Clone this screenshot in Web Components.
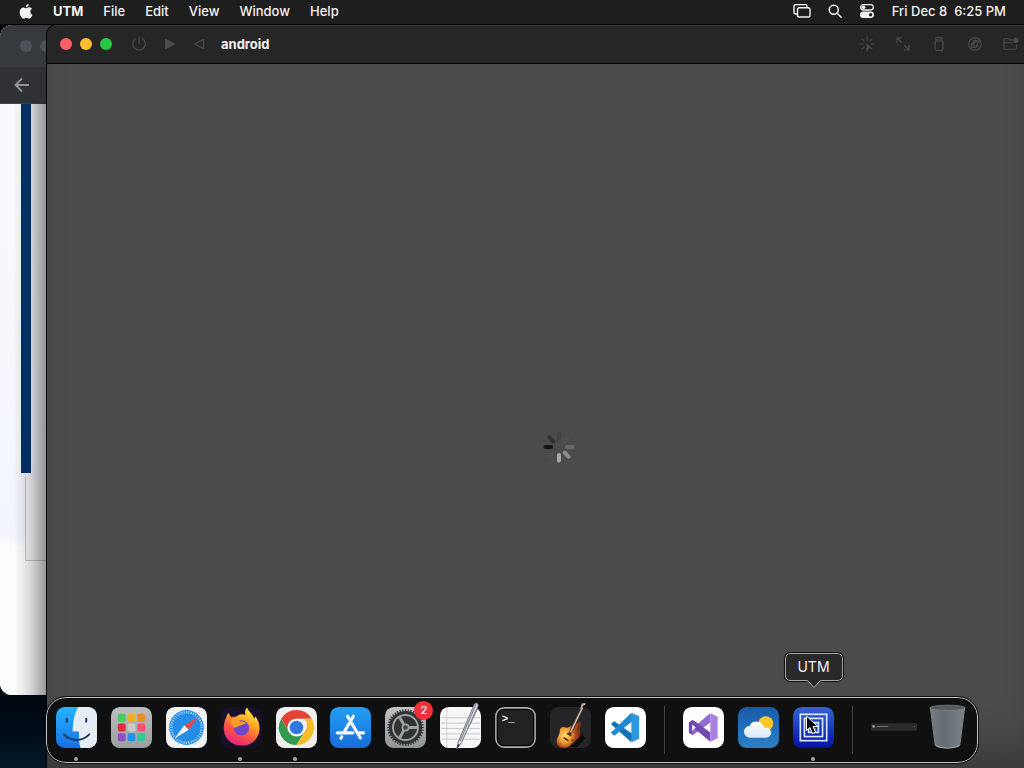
<!DOCTYPE html>
<html lang="en">
<head>
<meta charset="utf-8">
<title>Desktop</title>
<style>
  html, body { height: 100%; margin: 0; }
  body {
    overflow: hidden;
    background: #000;
    color: #f2f2f2;
    font: 500 13px/16px Inter, "Liberation Sans", sans-serif;
  }
</style>
</head>
<body>
<mac-desktop>
  <menu-bar slot="menubar" app="UTM" menus="File,Edit,View,Window,Help" clock="Fri Dec 8  6:25 PM"></menu-bar>
  <browser-window></browser-window>
  <vm-window name="android"></vm-window>
  <app-dock>
    <dock-item slot="apps" icon="finder" label="Finder" running></dock-item>
    <dock-item slot="apps" icon="launchpad" label="Launchpad"></dock-item>
    <dock-item slot="apps" icon="safari" label="Safari"></dock-item>
    <dock-item slot="apps" icon="firefox" label="Firefox" running></dock-item>
    <dock-item slot="apps" icon="chrome" label="Chrome" running></dock-item>
    <dock-item slot="apps" icon="appstore" label="App Store"></dock-item>
    <dock-item slot="apps" icon="settings" label="System Settings" badge="2"></dock-item>
    <dock-item slot="apps" icon="textedit" label="TextEdit"></dock-item>
    <dock-item slot="apps" icon="terminal" label="Terminal"></dock-item>
    <dock-item slot="apps" icon="garageband" label="GarageBand"></dock-item>
    <dock-item slot="apps" icon="vscode" label="Visual Studio Code"></dock-item>
    <dock-item slot="recent" icon="visualstudio" label="Visual Studio"></dock-item>
    <dock-item slot="recent" icon="weather" label="Weather"></dock-item>
    <dock-item slot="recent" icon="utm" label="UTM" running hovered></dock-item>
    <dock-item slot="files" icon="minimized" label="Minimized window" wide></dock-item>
    <dock-item slot="files" icon="trash" label="Trash"></dock-item>
  </app-dock>
</mac-desktop>

<script>
// Line icons inherit currentColor, dock icons bring their own colours.
const spokes = (n, r1, r2, c, extra) => Array.from({ length: n }, (_, i) =>
  `<path d="M${c} ${c - r1}V${c - r2}" transform="rotate(${i * 360 / n} ${c} ${c})" ${extra}/>`).join('');

const ICONS = {
  apple: ['0 0 14 17', `<path fill="currentColor" d="M9.700 1c.1 1.800-1.300 3.300-2.900 3.300C6.600 2.600 8 1.200 9.700 1zM7.200 5.200c.7 0 1.600-.9 3-.9 1.200 0 2.200.6 2.800 1.500-2.500 1.500-2.100 4.800.5 5.900-.6 1.700-1.900 4-3.300 4-1 0-1.400-.6-2.700-.6s-1.700.6-2.700.6C2.900 15.700.7 12.500.7 9.200c0-3.100 1.900-4.800 3.800-4.800 1.200 0 2 .8 2.700.8z"/>`],
  windows: ['0 0 18 16', `<g fill="none" stroke="currentColor" stroke-width="1.400"><path d="M4 11H2.600A1.600 1.600 0 0 1 1 9.400V3.200a1.600 1.600 0 0 1 1.600-1.600h9.800A1.600 1.600 0 0 1 14 3.200V4"/><rect x="4.500" y="4.800" width="12.500" height="9.200" rx="1.800"/></g>`],
  search: ['0 0 14 14', `<g fill="none" stroke="currentColor" stroke-width="1.500" stroke-linecap="round"><circle cx="5.800" cy="5.800" r="4.500"/><path d="M9.200 9.200l4 4"/></g>`],
  control: ['0 0 16 16', `<rect x="1.700" y="1.700" width="12.600" height="5.300" rx="2.650" fill="none" stroke="currentColor" stroke-width="1.300"/><circle cx="4.600" cy="4.350" r="1.800" fill="currentColor"/><rect x="1" y="8.600" width="14" height="6.400" rx="3.200" fill="currentColor"/><circle cx="11.600" cy="11.800" r="1.700" fill="#1e1e1e"/>`],
  back: ['0 0 16 16', `<path d="M15 8H2M8 1.500L1.500 8 8 14.500" fill="none" stroke="currentColor" stroke-width="1.800"/>`],
  power: ['0 0 16 16', `<path d="M8 1v7M4.500 2.600a6.300 6.300 0 1 0 7 0" fill="none" stroke="currentColor" stroke-width="1.200" stroke-linecap="round"/>`],
  play: ['0 0 16 16', `<path d="M4 2.300v11.400L14.500 8z" fill="currentColor"/>`],
  reverse: ['0 0 16 16', `<path d="M12.500 3.500v9L3.500 8z" fill="none" stroke="currentColor" stroke-width="1.200" stroke-linejoin="round"/>`],
  capture: ['0 0 16 16', `<g fill="none" stroke="currentColor" stroke-width="1.200" stroke-linecap="round">${spokes(8, 7, 4, 8, '')}</g><path d="M7 7l5.500 5-2.500.2-1.300 2.300z" fill="currentColor"/>`],
  resize: ['0 0 16 16', `<path d="M2 7V2h5M2 2l4.500 4.500M14 9v5H9m5 0L9.500 9.500" fill="none" stroke="currentColor" stroke-width="1.200"/>`],
  usb: ['0 0 16 16', `<g fill="none" stroke="currentColor" stroke-width="1.200"><path d="M5 5V1.500h6V5"/><rect x="4" y="5" width="8" height="9.500" rx="2"/><path d="M6.800 3v1M9.200 3v1"/></g>`],
  disc: ['0 0 16 16', `<g fill="none" stroke="currentColor" stroke-width="1.200"><circle cx="8" cy="8" r="6.300"/><path d="M4 11l3-6.500L12 5l-3 6.500zM4 8l8-3M7 12V5"/></g>`],
  folder: ['0 0 18 16', `<g fill="none" stroke="currentColor" stroke-width="1.200"><path d="M11 3.500H7.500L6 2H2.500A1.500 1.500 0 0 0 1 3.500v9A1.500 1.500 0 0 0 2.500 14h11a1.500 1.500 0 0 0 1.500-1.500V8M1 6.500h10"/></g><circle cx="14.500" cy="4" r="3" fill="currentColor"/>`],

  finder: ['0 0 42 42', `<defs><linearGradient id="a" x2="0" y2="1"><stop stop-color="#27b4fb"/><stop offset="1" stop-color="#1670e4"/></linearGradient><clipPath id="c"><rect width="42" height="42" rx="9"/></clipPath></defs>
    <g clip-path="url(#c)"><path fill="url(#a)" d="M0 0h42v42H0z"/><path fill="#e6edf5" d="M23 0h19v42H25c-1-4-1.500-8-1.500-17H17C17.500 14 19 6 23 0z"/></g>
    <path d="M11 12v3M31 12v3" stroke="#17355b" stroke-width="2" stroke-linecap="round"/><path d="M8 28c7 7.500 19 7.500 26 0" fill="none" stroke="#17355b" stroke-width="1.800" stroke-linecap="round"/>`],
  launchpad: ['0 0 42 42', `<defs><linearGradient id="a" x2="0" y2="1"><stop stop-color="#bcbdbf"/><stop offset="1" stop-color="#9c9ea0"/></linearGradient></defs><rect width="42" height="42" rx="9" fill="url(#a)"/>
    ${['#43cf5d', '#f5ad27', '#f28b1d', '#e42d3c', '#c9c9c9', '#f74e75', '#8950ca', '#268ee6', '#34c997'].map((c, i) => `<rect x="${7 + i % 3 * 10}" y="${7 + Math.floor(i / 3) * 10}" width="8" height="8" rx="1.800" fill="${c}"/>`).join('')}`],
  safari: ['0 0 42 42', `<rect width="42" height="42" rx="9" fill="#f0f1f4"/><circle cx="21" cy="21" r="17.800" fill="#248de5"/><g stroke="#d9efff" stroke-width=".8">${spokes(40, 17, 14.4, 21, '')}</g><path fill="#e64a46" d="M33 10L18.600 18.600l4.800 4.800z"/><path fill="#f2f6fa" d="M9 32l9.600-13.400 4.800 4.800z"/>`],
  firefox: ['0 0 42 42', `<defs><linearGradient id="a" x1=".8" y1="0" x2=".3" y2="1"><stop stop-color="#ffed4c"/><stop offset=".35" stop-color="#ffad25"/><stop offset=".65" stop-color="#ff5840"/><stop offset="1" stop-color="#e42080"/></linearGradient></defs><rect width="42" height="42" rx="9" fill="#171029"/>
    <path fill="url(#a)" d="M5.500 10l1.700-4 3.400 4.500 5.300-.7C19 6.500 22 7 25 8.300c-1-4 .2-6.200 1.700-7.700C29 6 32 6.300 34 12l1.300-2.500C40 16 40.500 23 38 29c-3 7-9.500 10.500-17 10.500C11.500 39.500 4 33 3 24c-.5-5.500.6-10 2.500-14z"/>
    <circle cx="21" cy="21.500" r="7.800" fill="#7145cc"/><path fill="#ff9d23" d="M10 14.500c4-2.500 8-2 10.500.5 3-.6 4.500.5 5 2-3 .5-4.500 2-7.200 2.500-2 1-3.500 2.500-5 1.500-2-1.300-3-4-3.300-6.500z"/>`],
  chrome: ['0 0 42 42', `<rect width="42" height="42" rx="9" fill="#eee"/><path fill="#e64335" d="M5.400 12a18 18 0 0 1 31.200 0H21a9 9 0 0 0-8.500 12.300z"/><path fill="#f9bd2c" d="M36.600 12A18 18 0 0 1 21 39l7.800-13.500A9 9 0 0 0 28.800 12z"/><path fill="#319950" d="M5.400 12A18 18 0 0 0 21 39l7.800-13.500a9 9 0 0 1-15.600 0z"/><circle cx="21" cy="21" r="9" fill="#f4f7fc"/><circle cx="21" cy="21" r="7" fill="#3078df"/>`],
  appstore: ['0 0 42 42', `<defs><linearGradient id="a" x2="0" y2="1"><stop stop-color="#239ff5"/><stop offset="1" stop-color="#176dda"/></linearGradient></defs><rect width="42" height="42" rx="9" fill="url(#a)"/><g fill="none" stroke="#f2f8ff" stroke-width="3.300" stroke-linecap="round"><path d="M18 9.500l13 22M24 9.500l-9.500 16M7.500 26.500h16M29.500 26.500h5M12 30.500l-.8 1.300"/></g>`],
  settings: ['0 0 42 42', `<defs><linearGradient id="a" x2="0" y2="1"><stop stop-color="#c1c3c4"/><stop offset="1" stop-color="#8f9494"/></linearGradient></defs><rect width="42" height="42" rx="9" fill="url(#a)"/><circle cx="21" cy="21" r="17" fill="#303435"/>
    <g stroke="#303435" stroke-width="1.300">${spokes(40, 18.8, 16, 21, '')}</g><circle cx="21" cy="21" r="12.800" fill="none" stroke="#9da2a2" stroke-width="2"/><g stroke="#9da2a2" stroke-width="3"><path d="M24 21h9M19.500 23.600l-4.500 7.800M19.500 18.400l-4.500-7.800"/></g><circle cx="21" cy="21" r="3.200" fill="#3d4242" stroke="#9da2a2" stroke-width="1.800"/>`],
  textedit: ['0 0 42 42', `<rect width="42" height="42" rx="9" fill="#f7f7f8"/><path d="M1 11h40M1 16.500h40M1 22h40M1 27.500h40M1 33h40" stroke="#bbb9bd" stroke-width=".8"/><path d="M7 1v40" stroke="#d5bebe" stroke-width=".7"/><path fill="#dfe2e8" stroke="#6b7079" stroke-width="1" d="M17 43l2-8L35-2.500q1-2 2.800-1.300T39-1L22 36.500z"/><path d="M20.500 35L37-3M38.500 1.500L29 21" stroke="#858b96" stroke-width="1.200"/><path fill="#333" d="M17 43l1.500-5 2 1z"/>`],
  terminal: ['0 0 42 42', `<rect x=".9" y=".9" width="40.200" height="40.200" rx="8.500" fill="#060606" stroke="#a9abab" stroke-width="1.600"/><rect x="3" y="3" width="36" height="36" rx="6" fill="#202122"/><text x="7" y="15" fill="#f0f0f0" font-family="Liberation Mono, monospace" font-size="11" font-weight="700">&gt;_</text>`],
  garageband: ['0 0 42 42', `<defs><radialGradient id="a" cx=".4"><stop stop-color="#ffdf6a"/><stop offset=".6" stop-color="#f09a34"/><stop offset="1" stop-color="#a8451a"/></radialGradient></defs><rect width="42" height="42" rx="9" fill="#252527"/>
    <path fill="#0c0c0c" d="M29 22l7 10-8 9H13z"/><path fill="#7a3218" d="M26 20c2-5 6-7 6-4s-2 4-1 8c1.500 5-1 8-4 10z"/><path fill="url(#a)" d="M10 25c-.5-3 2.500-5.500 5.500-4 2.500 1.200 4-.8 6-1.500l3-2.500c3-1 5 1.500 3.500 4s1.500 6 .5 9c-1 4-4 6-7 9-4 4.500-13 3.500-14.500-1.500C5.500 32.500 9.500 30 10 25z"/><path d="M20 28L32.500 2" stroke="#4b2a1b" stroke-width="3"/><path d="M21 26L33 1" stroke="#cac5c0" stroke-width="1.600"/><path d="M31 2l1.500-5.500 4-.5-.5 2-2 .5-1 4z" fill="#b5b0aa"/><path d="M14 31.500l5 3M17.500 27l4.500 2.500" stroke="#442614" stroke-width="1.500"/><circle cx="23" cy="34" r="1" fill="#442614"/>`],
  vscode: ['0 0 42 42', `<rect width="42" height="42" rx="9" fill="#fff"/><path fill="#1272b8" d="M27 36L6 17.500l3.500-3L28.500 28z"/><path fill="#1f8ad0" d="M27 6l1.500 8L9.500 29.500 6 26.500z"/><path fill="#2a97e0" d="M27 6l8 3.500v23L27 36z"/>`],
  visualstudio: ['0 0 42 42', `<rect width="42" height="42" rx="9" fill="#fff"/><path fill="#6a45a6" d="M6 16l4-3v16l-4-3z"/><path fill="#8f6ad0" d="M10 29l-2-6L28 6.500V16z"/><path fill="#7349b0" d="M10 13l18 13v9.500L8 19z"/><path fill="#fff" d="M9.500 18l3.500 3-3.500 3z"/><path fill="#a980e4" d="M28 6.500l7.500 3.500v22L28 35.500z"/>`],
  weather: ['0 0 42 42', `<defs><linearGradient id="a" x2="0" y2="1"><stop stop-color="#175ca9"/><stop offset="1" stop-color="#2d80c5"/></linearGradient><linearGradient id="b" x2="0" y2="1"><stop stop-color="#fff"/><stop offset="1" stop-color="#d9e8f9"/></linearGradient></defs><rect width="42" height="42" rx="9" fill="url(#a)"/><circle cx="28.500" cy="17" r="7.600" fill="#ffc52e"/><path fill="url(#b)" d="M12.500 31.500a6 6 0 0 1-.8-12 8 8 0 0 1 15.100 2 5.200 5.200 0 1 1 1.700 10z"/>`],
  utm: ['0 0 42 42', `<defs><linearGradient id="a" x2="0" y2="1"><stop stop-color="#3264d4"/><stop offset="1" stop-color="#0612a5"/></linearGradient></defs><rect width="42" height="42" rx="9" fill="url(#a)"/><g fill="none" stroke="#dce7ff" stroke-width="1.700"><rect x="7.500" y="7.500" width="27" height="27"/><rect x="11.700" y="11.700" width="18.600" height="18.600"/><path d="M16 16h10v10H16zM19 20v3h4"/></g>`],
  minimized: ['0 0 48 42', `<rect y="16.500" width="48" height="8" rx="1" fill="#2b2b2c"/><circle cx="2.700" cy="20" r="1.300" fill="#aaa"/><path d="M6 20h12M45 20h1" stroke="#707070" stroke-width="1.200"/>`],
  trash: ['0 0 42 48', `<defs><linearGradient id="a" x2="1" y2="0"><stop stop-color="#798186"/><stop offset=".4" stop-color="#626c72"/><stop offset="1" stop-color="#7d8286"/></linearGradient></defs><path fill="url(#a)" d="M2.500 3.500l5 39c.8 5 26.200 5 27 0l5-39z"/><ellipse cx="21" cy="4" rx="18.500" ry="2.800" fill="#53595d" stroke="#858a8d" stroke-width=".7"/><path d="M8.500 43c5 4 20 4 25 0" fill="none" stroke="#a3a8aa"/>`],
  cursor: ['0 0 14 20', `<path d="M1.500 1v14.500l3.500-3 2.500 6 3-1.300-2.500-5.700h4.700z" fill="#050505" stroke="#fff" stroke-width="1"/>`],
};

class UiIcon extends HTMLElement {
  constructor() {
    super();
    this.attachShadow({ mode: 'open' });
  }

  connectedCallback() {
    const [box, body] = ICONS[this.getAttribute('name')];
    this.shadowRoot.innerHTML = `
      <style>
        :host { display: block; flex: none; width: 16px; height: 16px; }
        svg { display: block; width: 100%; height: 100%; overflow: visible; }
      </style>
      <svg viewBox="${box}" aria-hidden="true">${body}</svg>
    `;
  }
}

class MacDesktop extends HTMLElement {
  constructor() {
    super();
    this.attachShadow({ mode: 'open' }).innerHTML = `
      <style>
        :host { display: flex; flex-direction: column; height: 100vh; }
        .space {
          position: relative;
          flex: 1;
          background: linear-gradient(#000 60%, #000a14 94%, #02192a);
        }
      </style>
      <slot name="menubar"></slot>
      <div class="space"><slot></slot></div>
    `;
  }
}

class MenuBar extends HTMLElement {
  constructor() {
    super();
    this.attachShadow({ mode: 'open' });
  }

  connectedCallback() {
    const menus = this.getAttribute('menus').split(',');
    this.shadowRoot.innerHTML = `
      <style>
        :host {
          display: flex;
          justify-content: space-between;
          align-items: center;
          box-sizing: border-box;
          height: 24px;
          padding: 0 18px 2px 19px;
          background: #1e1e1e;
        }
        nav, .status { display: flex; align-items: center; gap: 20px; }
        .status { gap: 17px; }
        button { padding: 0; border: 0; background: none; color: inherit; font: inherit; }
        .app { font-weight: 700; }
        .apple { width: 14px; height: 17px; }
        .search { width: 14px; height: 14px; }
        .windows { width: 18px; }
        time { white-space: pre; }
      </style>
      <nav>
        <button aria-label="Apple menu"><ui-icon class="apple" name="apple"></ui-icon></button>
        <button class="app">${this.getAttribute('app')}</button>
        ${menus.map(m => `<button>${m}</button>`).join('')}
      </nav>
      <div class="status">
        <button aria-label="Displays"><ui-icon class="windows" name="windows"></ui-icon></button>
        <button aria-label="Search"><ui-icon class="search" name="search"></ui-icon></button>
        <button aria-label="Control Center"><ui-icon name="control"></ui-icon></button>
        <time>${this.getAttribute('clock')}</time>
      </div>
    `;
  }
}

// Sits behind the virtual machine, only its left edge shows.
class BrowserWindow extends HTMLElement {
  constructor() {
    super();
    this.attachShadow({ mode: 'open' }).innerHTML = `
      <style>
        :host {
          position: absolute;
          inset: 1px 50% 73px 0;
          display: flex;
          flex-direction: column;
          overflow: hidden;
          border-radius: 12px;
          background: #fdfdfd;
        }
        .tabs {
          display: flex;
          align-items: center;
          gap: 8px;
          height: 42px;
          padding-left: 20px;
          background: #363a3d;
        }
        .tabs i { width: 12px; height: 12px; border-radius: 50%; background: #4c515a; }
        .nav { display: flex; align-items: center; height: 36px; padding-left: 14px; background: #303135; border-bottom: 1px solid #45464a; }
        button { padding: 0; border: 0; background: none; color: #939395; }
        .page {
          display: grid;
          grid-template: 369px 88px 1fr / 21px 10px 1fr;
          flex: 1;
          background: linear-gradient(#f8fafe, #f2f5fc 73%, #fdfdfd 75%);
        }
        .stripe { grid-area: 1 / 2; position: relative; z-index: 1; background: #052e61; }
        .card { grid-area: 2 / 2 / 3 / 4; margin: 4px 0 0 4px; border: solid #c8c8c8; border-width: 0 0 1px 1px; background: #f6f6f6; }
        .shade {
          position: absolute;
          inset: 78px auto 0 0;
          width: 46px;
          background: linear-gradient(90deg, transparent 30%, #0002 65%, #0006);
        }
      </style>
      <div class="tabs"><i></i><i></i><i></i></div>
      <div class="nav"><button aria-label="Back"><ui-icon name="back"></ui-icon></button></div>
      <div class="page"><div class="stripe"></div><div class="card"></div></div>
      <div class="shade"></div>
    `;
  }
}

class VmWindow extends HTMLElement {
  constructor() {
    super();
    this.attachShadow({ mode: 'open' });
  }

  connectedCallback() {
    this.shadowRoot.innerHTML = `
      <style>
        :host {
          position: absolute;
          inset: 0 0 0 46px;
          display: flex;
          flex-direction: column;
          overflow: hidden;
          border: solid #000;
          border-width: 1px 0 0 1px;
          border-radius: 11px 0 0 0;
          background: #4b4b4b;
        }
        header {
          display: flex;
          align-items: center;
          justify-content: space-between;
          height: 35px;
          padding: 0 5px 2px 13px;
          border-top: 1px solid #3b3b3b;
          border-bottom: 1px solid #000;
          background: #262626;
        }
        .left, .lights, .tools { display: flex; align-items: center; }
        .lights { gap: 8px; margin-right: 19px; }
        .left > button { margin-right: 14px; }
        .tools { gap: 20px; }
        button { padding: 0; border: 0; background: none; color: #4c4c4c; }
        .lights button { width: 12px; height: 12px; border-radius: 50%; }
        .close { background: #ff5f63; }
        .min { background: #fdbd2f; }
        .zoom { background: #28c940; }
        h1 { margin: 0; font-size: 13px; font-weight: 700; }
        main { display: grid; place-items: center; flex: 1; padding: 61px 0 0 46px; box-shadow: inset 0 -40px 50px -30px #0005; }
        svg { display: block; width: 32px; height: 32px; }
      </style>
      <header>
        <div class="left">
          <div class="lights">
            <button class="close" aria-label="Close"></button>
            <button class="min" aria-label="Minimize"></button>
            <button class="zoom" aria-label="Zoom"></button>
          </div>
          <button aria-label="Power"><ui-icon name="power"></ui-icon></button>
          <button aria-label="Play"><ui-icon name="play"></ui-icon></button>
          <button aria-label="Restart"><ui-icon name="reverse"></ui-icon></button>
          <h1>${this.getAttribute('name')}</h1>
        </div>
        <div class="tools">
          ${['capture', 'resize', 'usb', 'disc', 'folder'].map(n => `<button aria-label="${n}"><ui-icon name="${n}"></ui-icon></button>`).join('')}
        </div>
      </header>
      <main>
        <svg viewBox="0 0 32 32" role="img" aria-label="Loading">
          <g stroke-width="4" stroke-linecap="round">
            ${['#434343', '#505050', '#6b6b6b', '#8c8c8c', '#a8a8a8', '#505050', '#161616', '#303030'].map((c, i) =>
              `<path d="M16 8V2.500" stroke="${c}" transform="rotate(${i * 45} 16 16)"/>`).join('')}
          </g>
        </svg>
      </main>
    `;
  }
}

class AppDock extends HTMLElement {
  constructor() {
    super();
    this.attachShadow({ mode: 'open' }).innerHTML = `
      <style>
        :host {
          position: absolute;
          inset: auto 46px 5px 46px;
          display: flex;
          align-items: center;
          gap: 18px;
          box-sizing: border-box;
          height: 66px;
          padding: 0 9px;
          border: 1px solid #c4c4c4;
          border-radius: 20px;
          outline: 1px solid #111;
          background: #101010;
        }
        .group { display: flex; align-items: center; gap: 14px; }
        .apps { flex: 1; justify-content: space-between; gap: 0; }
        .files { gap: 10px; }
        hr { width: 1px; height: 48px; margin: 0; border: 0; background: #414141; }
      </style>
      <div class="group apps"><slot name="apps"></slot></div>
      <hr>
      <div class="group"><slot name="recent"></slot></div>
      <hr>
      <div class="group files"><slot name="files"></slot></div>
    `;
  }
}

class DockItem extends HTMLElement {
  constructor() {
    super();
    this.attachShadow({ mode: 'open' });
  }

  connectedCallback() {
    const label = this.getAttribute('label');
    const badge = this.getAttribute('badge');
    this.shadowRoot.innerHTML = `
      <style>
        :host { position: relative; display: block; flex: none; width: 41px; margin-bottom: 6px; }
        :host([wide]) { width: 46px; }
        button { display: block; width: 100%; padding: 0; border: 0; background: none; }
        button ui-icon { width: 100%; height: 41px; }
        :host([icon="trash"]) button ui-icon { height: 46px; }
        .dot { position: absolute; top: 50px; left: 50%; width: 4px; height: 4px; margin-left: -3px; border-radius: 50%; background: #a5a5a5; }
        .badge {
          position: absolute;
          top: -6px;
          right: -7px;
          width: 19px;
          height: 19px;
          border-radius: 50%;
          background: #ef3038;
          color: #fff;
          font-size: 11px;
          line-height: 19px;
          text-align: center;
        }
        .tip {
          position: absolute;
          bottom: 67px;
          left: 50%;
          transform: translateX(-50%);
          padding: 4px 12px;
          border: 1px solid #a8a8a8;
          border-radius: 5px;
          outline: 1px solid #111;
          background: #292929;
          color: #f0f0f0;
          font-size: 14px;
          font-weight: 400;
          line-height: 18px;
        }
        .tip svg { position: absolute; top: 100%; left: 50%; width: 18px; height: 9px; margin-left: -9px; }
        .cursor { position: absolute; top: 8px; left: 12px; width: 14px; height: 20px; }
      </style>
      <button aria-label="${label}"><ui-icon name="${this.getAttribute('icon')}"></ui-icon></button>
      ${this.hasAttribute('running') ? '<span class="dot"></span>' : ''}
      ${badge ? `<span class="badge">${badge}</span>` : ''}
      ${this.hasAttribute('hovered') ? `
        <span class="tip" role="tooltip">${label}<svg viewBox="0 0 18 9"><path d="M1 0h16q-2 0-3 1.500L9 7 4 1.500Q3 0 1 0z" fill="#292929"/><path d="M1 .5q2 0 3 1.500l5 5.500L14 2q1-1.500 3-1.500" fill="none" stroke="#a8a8a8"/></svg></span>
        <ui-icon class="cursor" name="cursor"></ui-icon>` : ''}
    `;
  }
}

customElements.define('ui-icon', UiIcon);
customElements.define('mac-desktop', MacDesktop);
customElements.define('menu-bar', MenuBar);
customElements.define('browser-window', BrowserWindow);
customElements.define('vm-window', VmWindow);
customElements.define('app-dock', AppDock);
customElements.define('dock-item', DockItem);
</script>
</body>
</html>
